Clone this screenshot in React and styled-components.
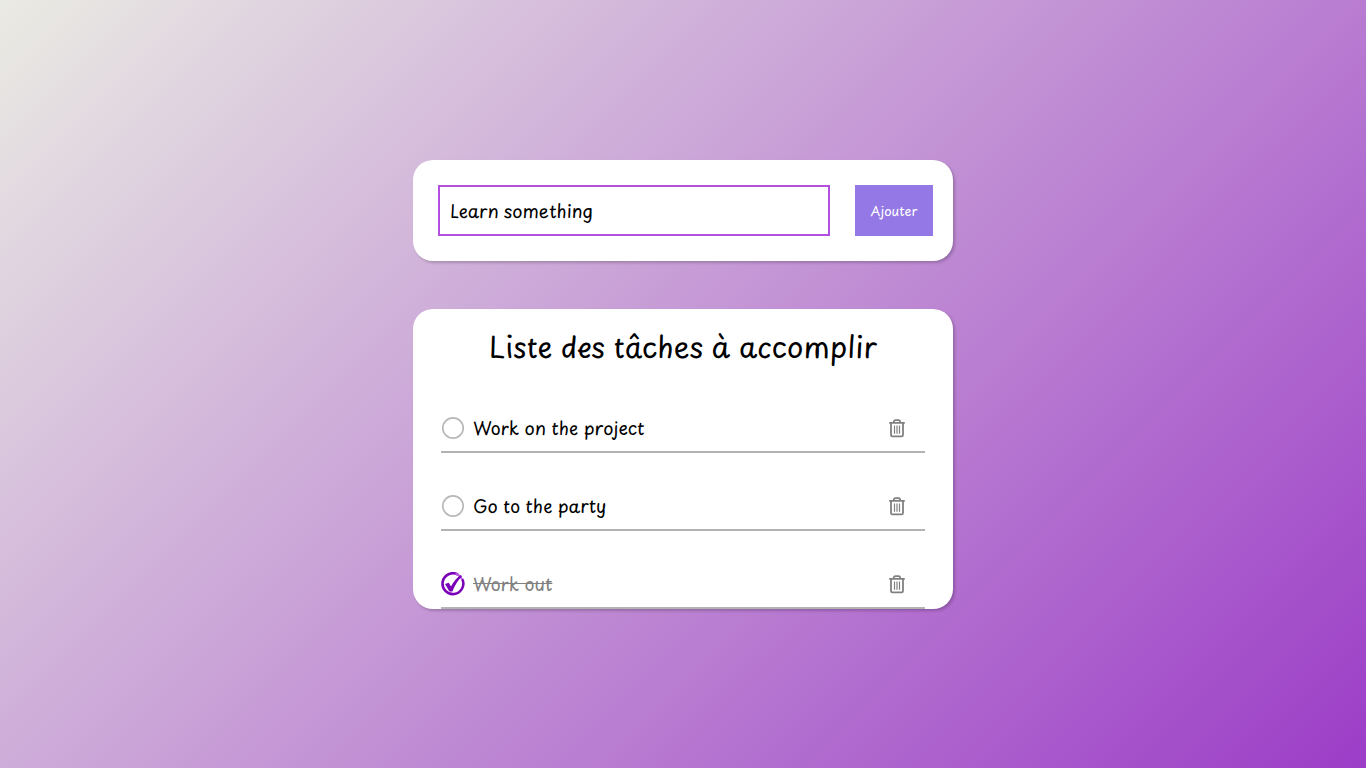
import React, { useState } from "react";
import styled, { createGlobalStyle } from "styled-components";

const GlobalStyle = createGlobalStyle`
  *, *::before, *::after { box-sizing: border-box; }
  body {
    margin: 0;
    color: #000;
    font-family: "Playpen Sans", "Comic Neue", Lato, cursive;
    text-rendering: optimizeLegibility;
  }
  button, input { font-family: inherit; }
`;

const Page = styled.main`
  min-height: 100vh;
  padding: 24px;
  display: flex;
  flex-direction: column;
  align-items: center;
  justify-content: center;
  gap: 48px;
  background: linear-gradient(135deg, #eaebe3 0%, #9c3dc7 100%);
`;

const cardWidth = "540px";

const AddForm = styled.form`
  width: 100%;
  max-width: ${cardWidth};
  padding: 25px 20px 25px 25px;
  display: flex;
  gap: 25px;
  background: #fff;
  border-radius: 20px;
  box-shadow: 2px 2px 3px rgba(0, 0, 0, 0.2);
`;

const TaskInput = styled.input`
  flex: 1;
  min-width: 0;
  height: 51px;
  padding: 0 10px;
  border: 2px solid #b350df;
  border-radius: 0;
  outline: none;
  background: #fff;
  color: #000;
  font-size: 18px;
`;

const AddButton = styled.button`
  width: 78px;
  padding: 0;
  border: 0;
  background: #9378e6;
  color: #fff;
  font-size: 13px;
  cursor: pointer;
`;

const ListCard = styled.section`
  width: 100%;
  max-width: ${cardWidth};
  height: 300px;
  padding: 18px 28px 0;
  overflow: hidden;
  background: #fff;
  border-radius: 20px;
  box-shadow: 2px 2px 3px rgba(0, 0, 0, 0.2);
`;

const Title = styled.h1`
  margin: 0 0 10px;
  font-size: 29px;
  line-height: 38px;
  font-weight: 400;
  text-align: center;
`;

const Tasks = styled.ul`
  margin: 0;
  padding: 0;
  list-style: none;
`;

const Task = styled.li`
  height: 78px;
  padding: 30px 20px 0 0;
  display: flex;
  align-items: center;
  border-bottom: 2px solid #b3b3b3;
`;

const TaskLabel = styled.label`
  flex: 1;
  display: flex;
  align-items: center;
  gap: 8px;
  font-size: 18px;
  line-height: 24px;
  color: ${(p) => (p.$done ? "#808080" : "#000")};
  text-decoration: ${(p) => (p.$done ? "line-through" : "none")};
  cursor: pointer;
`;

const Toggle = styled.span`
  display: grid;
  width: 24px;
  height: 24px;

  > * { grid-area: 1 / 1; }
`;

const Checkbox = styled.input`
  appearance: none;
  width: 24px;
  height: 24px;
  margin: 0;
  border-radius: 50%;
`;

const DeleteButton = styled.button`
  display: flex;
  padding: 0;
  border: 0;
  background: none;
  color: #808080;
  cursor: pointer;
`;

function CircleIcon({ checked }) {
  return (
    <svg width="24" height="24" viewBox="0 0 24 24" fill="none" aria-hidden="true">
      {checked ? (
        <>
          <path d="M17 2.6A10.4 10.4 0 1 0 21.2 7" stroke="#7a00b8" strokeWidth="2.6" />
          <path d="M14.5 1.7Q18.5 2.8 21 7" stroke="#b95be0" strokeWidth="2" />
          <path d="M4 12L7.8 10.8L10 14.6Q13.5 7.4 19.7 3L21 4.3Q14.8 10.6 11.4 19.5H8.4Z" fill="#7a00b8" />
        </>
      ) : (
        <circle cx="12" cy="12" r="10.2" stroke="#b8b8b8" strokeWidth="1.7" />
      )}
    </svg>
  );
}

function TrashIcon() {
  return (
    <svg width="16" height="20" viewBox="0 0 16 20" fill="none" stroke="currentColor" aria-hidden="true">
      <path d="M0.2 4.9H15.8" strokeWidth="1.9" />
      <path d="M4.6 4.5Q4.8 2.1 6.5 2.1H9.5Q11.2 2.1 11.4 4.5" strokeWidth="1.6" />
      <path d="M2 5V17Q2 18.4 3.5 18.4H12.5Q14 18.4 14 17V5" strokeWidth="1.8" />
      <path d="M5.5 7.5V15.8M8 7.5V15.8M10.5 7.5V15.8" strokeWidth="1.2" />
    </svg>
  );
}

const initialTasks = [
  { id: 1, text: "Work on the project", done: false },
  { id: 2, text: "Go to the party", done: false },
  { id: 3, text: "Work out", done: true },
];

export default function App() {
  const [tasks, setTasks] = useState(initialTasks);
  const [draft, setDraft] = useState("Learn something");

  const add = (event) => {
    event.preventDefault();
    if (!draft.trim()) return;
    setTasks([...tasks, { id: Date.now(), text: draft.trim(), done: false }]);
    setDraft("");
  };
  const toggle = (id) =>
    setTasks(tasks.map((t) => (t.id === id ? { ...t, done: !t.done } : t)));
  const remove = (id) => setTasks(tasks.filter((t) => t.id !== id));

  return (
    <>
      <GlobalStyle />
      <Page>
        <AddForm onSubmit={add}>
          <TaskInput
            type="text"
            aria-label="Nouvelle tâche"
            value={draft}
            onChange={(e) => setDraft(e.target.value)}
          />
          <AddButton type="submit">Ajouter</AddButton>
        </AddForm>
        <ListCard>
          <Title>Liste des tâches à accomplir</Title>
          <Tasks>
            {tasks.map((task) => (
              <Task key={task.id}>
                <TaskLabel $done={task.done}>
                  <Toggle>
                    <CircleIcon checked={task.done} />
                    <Checkbox
                      type="checkbox"
                      checked={task.done}
                      onChange={() => toggle(task.id)}
                    />
                  </Toggle>
                  {task.text}
                </TaskLabel>
                <DeleteButton
                  type="button"
                  aria-label={`Supprimer ${task.text}`}
                  onClick={() => remove(task.id)}
                >
                  <TrashIcon />
                </DeleteButton>
              </Task>
            ))}
          </Tasks>
        </ListCard>
      </Page>
    </>
  );
}
